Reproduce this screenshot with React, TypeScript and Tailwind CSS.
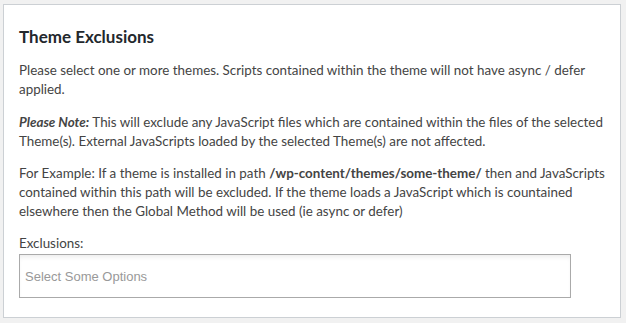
import React from 'react';

export default function App() {
  return (
    <div className="w-[626px] h-[323px] bg-[#f1f1f1] pt-[4px] pl-[3px] font-['Lato',sans-serif] text-[#444]">
      <div className="w-[618px] h-[314px] bg-white border border-[#ccd0d4] pl-[15px] pr-[8px] pt-[20px]">
        <h2 className="text-[17px] font-bold text-[#23282d] leading-[24px]">Theme Exclusions</h2>
        <p className="mt-[12px] text-[13.4px] leading-[19px]">
          Please select one or more themes. Scripts contained within the theme will not have async / defer applied.
        </p>
        <p className="mt-[14px] text-[13.4px] leading-[19px]">
          <strong className="italic font-bold">Please Note:</strong> This will exclude any JavaScript files which are contained within the files of the selected Theme(s). External JavaScripts loaded by the selected Theme(s) are not affected.
        </p>
        <p className="mt-[13px] text-[13.4px] leading-[19px]">
          For Example: If a theme is installed in path <strong className="font-bold">/wp-content/themes/some-theme/</strong> then and JavaScripts contained within this path will be excluded. If the theme loads a JavaScript which is countained elsewhere then the Global Method will be used (ie async or defer)
        </p>
        <div className="mt-[13px] text-[13.4px] leading-[19px]">Exclusions:</div>
        <div className="mt-[1px] w-[552px] h-[44px] border border-[#aaa] bg-white shadow-[inset_0_4px_5px_-2px_rgba(0,0,0,0.08)] flex items-center px-[5px] pt-[2px]">
          <span className="font-['Liberation_Sans',Arial,sans-serif] text-[13px] text-[#999]">Select Some Options</span>
        </div>
      </div>
    </div>
  );
}
